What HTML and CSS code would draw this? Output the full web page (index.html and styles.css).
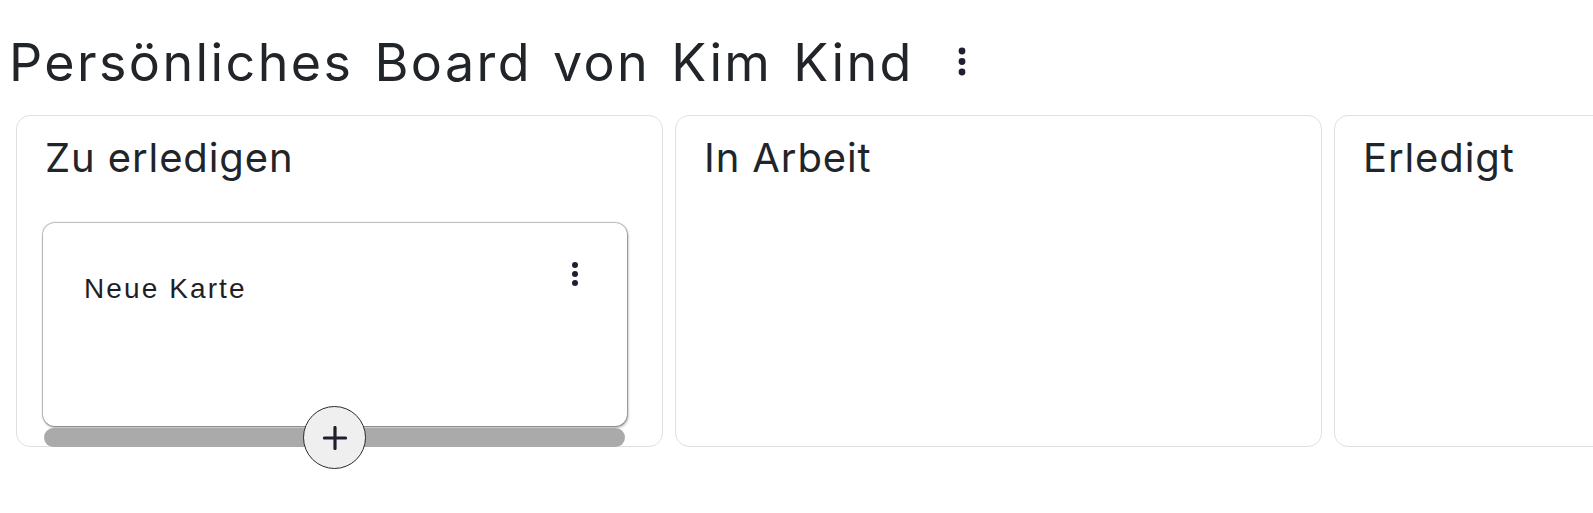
FILE: index.html
```html
<!DOCTYPE html>
<html lang="de">
<head>
<meta charset="utf-8">
<title>Persönliches Board von Kim Kind</title>
<link rel="stylesheet" href="styles.css">
</head>
<body>
<main class="board">
  <header class="board-head">
    <h1 class="board-title">Persönliches Board von Kim Kind</h1>
    <button class="kebab kebab-lg" aria-label="Board-Menü">
      <svg width="10" height="30" viewBox="0 0 10 30"><circle cx="5" cy="4" r="3.4"/><circle cx="5" cy="14.5" r="3.4"/><circle cx="5" cy="25" r="3.4"/></svg>
    </button>
  </header>
  <div class="columns">
    <section class="column">
      <h2 class="column-title">Zu erledigen</h2>
      <div class="card-list">
        <article class="card">
          <p class="card-title">Neue Karte</p>
          <button class="kebab kebab-sm" aria-label="Karten-Menü">
            <svg width="8" height="26" viewBox="0 0 8 26"><circle cx="4" cy="4" r="3"/><circle cx="4" cy="13" r="3"/><circle cx="4" cy="22" r="3"/></svg>
          </button>
        </article>
        <div class="card-bar">
          <button class="add-btn" aria-label="Karte hinzufügen">
            <svg width="24" height="24" viewBox="0 0 24 24"><path d="M12 1.5v21M1.5 12h21" stroke-width="3.2" stroke-linecap="round"/></svg>
          </button>
        </div>
      </div>
    </section>
    <section class="column">
      <h2 class="column-title">In Arbeit</h2>
    </section>
    <section class="column">
      <h2 class="column-title">Erledigt</h2>
    </section>
  </div>
</main>
</body>
</html>
```

FILE: styles.css
```css
* { box-sizing: border-box; }
html, body { margin: 0; padding: 0; background: #fff; }
html { height: 100%; overflow: hidden; }
body {
  min-height: 100%;
  font-family: Inter, "Noto Sans", sans-serif;
  color: #212529;
}
.board {
  min-height: 513px;
  padding: 33px 0 0 9px;
}
.board-head {
  display: flex;
  align-items: center;
  gap: 43px;
}
.board-title {
  margin: 0;
  font-size: 52px;
  font-weight: 400;
  letter-spacing: 2.4px;
  word-spacing: 4px;
  line-height: 60px;
}
.kebab {
  border: 0;
  background: none;
  padding: 0;
  display: flex;
  cursor: pointer;
}
.kebab svg { fill: #1f1f30; }
.kebab-lg { margin-top: -2px; }
.columns {
  display: flex;
  gap: 12px;
  padding-left: 7px;
  margin-top: 22px;
}
.column {
  flex: 0 0 647px;
  height: 332px;
  border: 1px solid #e0e0e0;
  border-radius: 14px;
  padding: 0 26px;
}
.column-title {
  margin: 0;
  padding: 18px 0 0 2px;
  font-size: 40px;
  font-weight: 400;
  line-height: 48px;
  letter-spacing: 0.9px;
}
.card-list {
  margin-top: 41px;
  width: 584px;
  position: relative;
}
.card {
  position: relative;
  height: 203px;
  border-radius: 12px;
  background: #fff;
  box-shadow: 0 0 1px 1px rgba(0,0,0,0.28), 1px 2px 3px rgba(0,0,0,0.3);
  padding: 49px 41px;
}
.card-title {
  margin: 0;
  font-family: "Liberation Sans", Arial, sans-serif;
  font-size: 28px;
  letter-spacing: 2.1px;
  line-height: 1.2;
  color: #1e1f24;
}
.kebab-sm {
  position: absolute;
  top: 38px;
  right: 48px;
}
.card-bar {
  margin: 2px 2px 0 1px;
  height: 19px;
  border-radius: 10px;
  background: #aaaaaa;
  position: relative;
}
.add-btn {
  position: absolute;
  left: 259px;
  top: -22px;
  width: 63px;
  height: 63px;
  border-radius: 50%;
  border: 1px solid #2a2a2a;
  background: #efefef;
  display: flex;
  align-items: center;
  justify-content: center;
  padding: 0;
  cursor: pointer;
}
.add-btn svg { stroke: #1f1f30; fill: none; }
```
